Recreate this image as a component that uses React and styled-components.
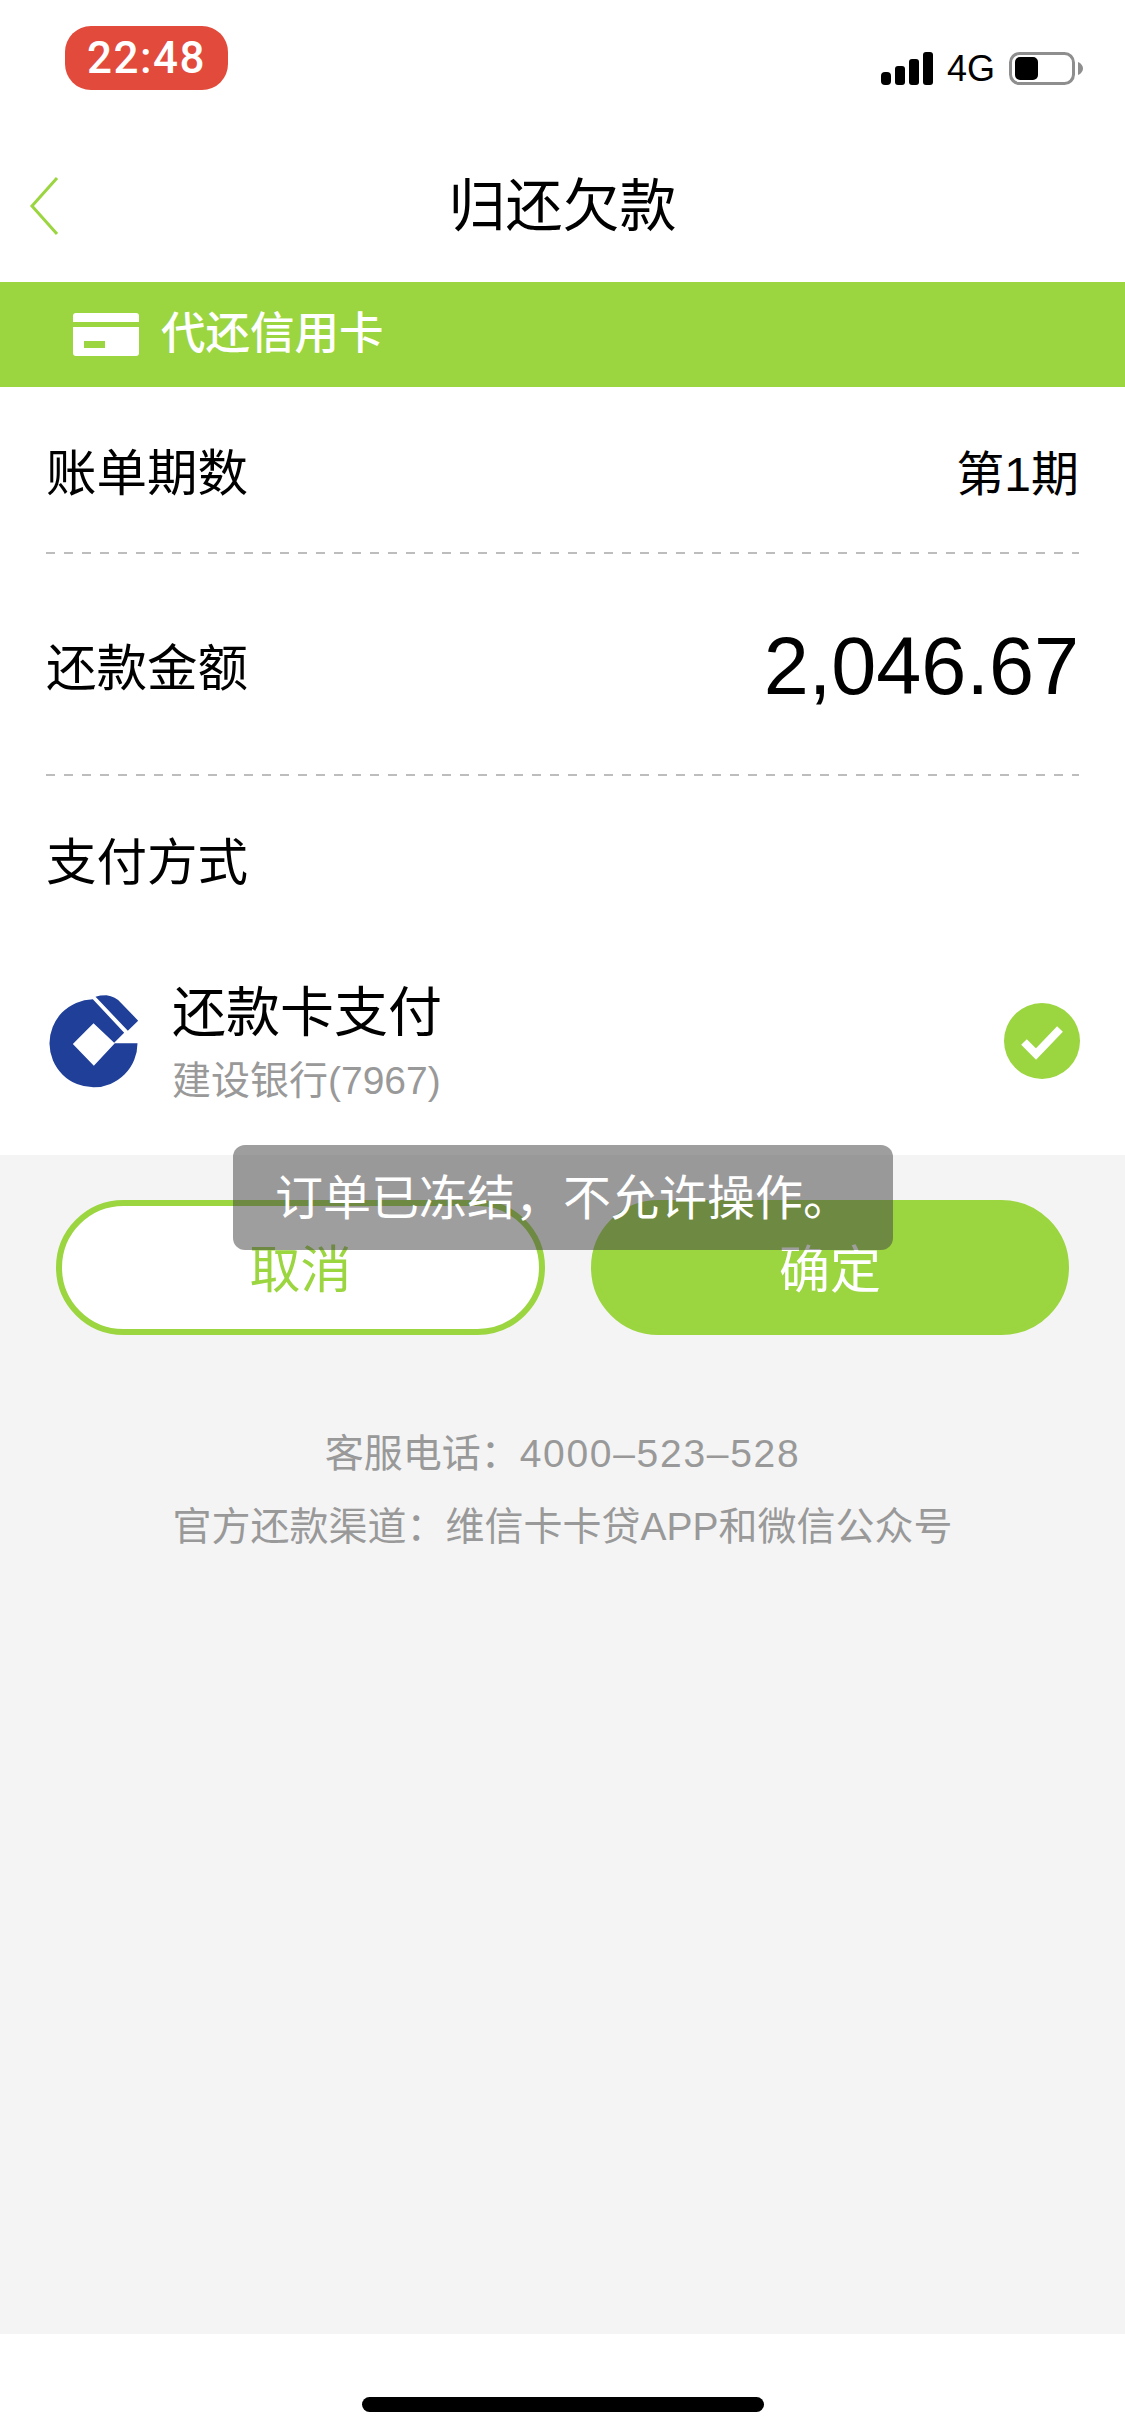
import React from "react"
import styled, { createGlobalStyle } from "styled-components"

const GlobalStyle = createGlobalStyle`
  html, body {
    margin: 0;
    padding: 0;
    background: #fff;
  }
  * { box-sizing: border-box; }
  body {
    font-family: "Liberation Sans", "Noto Sans CJK SC", sans-serif;
  }
`

const GREEN = "#9bd53f"

function SignalIcon() {
  return (
    <svg width="52" height="33" viewBox="0 0 52 33">
      <rect x="0" y="20" width="10" height="13" rx="4" fill="#000" />
      <rect x="14" y="14" width="10" height="19" rx="3" fill="#000" />
      <rect x="28" y="7" width="10" height="26" rx="3" fill="#000" />
      <rect x="42" y="0" width="10" height="33" rx="3" fill="#000" />
    </svg>
  )
}

function BatteryIcon() {
  return (
    <svg width="74" height="33" viewBox="0 0 74 33">
      <rect x="1.5" y="1.5" width="63" height="30" rx="9" fill="#fff" stroke="#8e8e8e" strokeWidth="3" />
      <rect x="6" y="5" width="23" height="23" rx="5" fill="#000" />
      <path d="M69 10 C72 11 74 14 74 16.5 C74 19 72 22 69 23 Z" fill="#8e8e8e" />
    </svg>
  )
}

function BackIcon() {
  return (
    <svg width="30" height="58" viewBox="0 0 30 58">
      <polyline points="28,1 3,29 28,57" fill="none" stroke={GREEN} strokeWidth="3" />
    </svg>
  )
}

function CardIcon() {
  return (
    <svg width="66" height="43" viewBox="0 0 66 43">
      <path d="M3 0 H63 a3 3 0 0 1 3 3 V9 H0 V3 a3 3 0 0 1 3 -3 Z" fill="#fff" />
      <path fillRule="evenodd" d="M0 14 H66 V40 a3 3 0 0 1 -3 3 H3 a3 3 0 0 1 -3 -3 Z M11 28 V35 H32 V28 Z" fill="#fff" />
    </svg>
  )
}

function BankLogo() {
  return (
    <svg width="92" height="95" viewBox="50 70 275 285">
      <path d="M184 86 L278 186 L248 216 L186 158 L124 220 L187 285 L250 218 L318 218 A132 132 0 1 1 184 86 Z" fill="#1f3f99" />
      <path d="M192 78 Q205 74 225 74 Q252 78 268 96 L320 150 L289 180 L205 92 Z" fill="#1f3f99" />
    </svg>
  )
}

function CheckIcon() {
  return (
    <svg width="76" height="76" viewBox="0 0 76 76">
      <circle cx="38" cy="38" r="38" fill={GREEN} />
      <polyline points="20,39 32,51 56,26" fill="none" stroke="#fff" strokeWidth="8" />
    </svg>
  )
}

export default function App() {
  return (
    <>
      <GlobalStyle />
      <Page>
        <StatusBar>
          <TimePill>22:48</TimePill>
          <StatusIcons>
            <SignalIcon />
            <NetworkLabel>4G</NetworkLabel>
            <BatteryIcon />
          </StatusIcons>
        </StatusBar>
        <NavBar>
          <BackButton><BackIcon /></BackButton>
          <Title>归还欠款</Title>
        </NavBar>
        <Banner>
          <CardIcon />
          <BannerText>代还信用卡</BannerText>
        </Banner>
        <Panel>
          <Row $height={167} $dashed>
            <Label>账单期数</Label>
            <Value>第1期</Value>
          </Row>
          <Row $height={222} $dashed>
            <Label>还款金额</Label>
            <Amount>2,046.67</Amount>
          </Row>
          <Row $height={166}>
            <Label>支付方式</Label>
          </Row>
          <BankRow>
            <BankLogo />
            <BankInfo>
              <BankTitle>还款卡支付</BankTitle>
              <BankSub>建设银行(7967)</BankSub>
            </BankInfo>
            <CheckIcon />
          </BankRow>
        </Panel>
        <Body>
          <Actions>
            <ActionButton>取消</ActionButton>
            <ActionButton $primary>确定</ActionButton>
          </Actions>
          <Service>
            <ServiceLine>客服电话：<Phone>4000–523–528</Phone></ServiceLine>
            <ServiceLine>官方还款渠道：维信卡卡贷APP和微信公众号</ServiceLine>
          </Service>
        </Body>
        <HomeBar>
          <HomeIndicator />
        </HomeBar>
        <Toast>订单已冻结，不允许操作。</Toast>
      </Page>
    </>
  )
}

const Page = styled.div`
  position: relative;
  display: flex;
  flex-direction: column;
  width: 1125px;
  height: 2436px;
  overflow: hidden;
  background: #fff;
`

const StatusBar = styled.div`
  display: flex;
  justify-content: space-between;
  align-items: flex-end;
  height: 90px;
  padding: 26px 42px 5px 65px;
`

const TimePill = styled.div`
  display: flex;
  align-items: center;
  justify-content: center;
  width: 163px;
  height: 64px;
  margin-bottom: -5px;
  border-radius: 26px;
  background: #e24a3b;
  color: #fff;
  font-family: Roboto, sans-serif;
  font-size: 44px;
  font-weight: 500;
  letter-spacing: 1.5px;
`

const StatusIcons = styled.div`
  display: flex;
  align-items: flex-end;
  gap: 14px;
`

const NetworkLabel = styled.span`
  color: #000;
  font-size: 36px;
  line-height: 33px;
`

const NavBar = styled.div`
  position: relative;
  display: flex;
  align-items: center;
  justify-content: center;
  height: 192px;
  padding-top: 40px;
`

const BackButton = styled.div`
  position: absolute;
  left: 29px;
  top: 87px;
  line-height: 0;
`

const Title = styled.div`
  color: #000;
  font-size: 57px;
  line-height: 1;
`

const Banner = styled.div`
  display: flex;
  align-items: center;
  gap: 22px;
  height: 105px;
  padding-left: 73px;
  background: ${GREEN};
`

const BannerText = styled.div`
  color: #fff;
  font-size: 44.5px;
  font-weight: 500;
  line-height: 1;
`

const Panel = styled.div`
  display: flex;
  flex-direction: column;
  padding: 0 46px;
  height: 768px;
`

const Row = styled.div`
  display: flex;
  align-items: center;
  justify-content: space-between;
  flex: none;
  height: ${props => props.$height}px;
  background: ${props => props.$dashed
    ? "repeating-linear-gradient(90deg, #bdbdbd 0 9px, transparent 9px 18px) left bottom / 100% 2px no-repeat"
    : "none"};
`

const Label = styled.div`
  color: #000;
  font-size: 50.5px;
  line-height: 1;
  margin-top: 8px;
`

const Value = styled.div`
  color: #000;
  font-size: 48px;
  line-height: 1;
  margin-top: 8px;
`

const Amount = styled.div`
  color: #000;
  font-size: 81px;
  line-height: 1;
  margin-top: 3px;
`

const BankRow = styled.div`
  display: flex;
  align-items: center;
  margin: 24px -1px 0 2px;
  height: 150px;
`

const BankInfo = styled.div`
  flex: 1;
  display: flex;
  flex-direction: column;
  gap: 21px;
  margin-left: 32px;
  margin-top: 4px;
`

const BankTitle = styled.div`
  color: #000;
  font-size: 54px;
  line-height: 1;
`

const BankSub = styled.div`
  color: #999;
  font-size: 39px;
  line-height: 1;
`

const Body = styled.div`
  flex: 1;
  display: flex;
  flex-direction: column;
  background: #f4f4f4;
`

const Actions = styled.div`
  display: grid;
  grid-template-columns: 489px 478px;
  justify-content: space-between;
  margin: 45px 56px 0 56px;
`

const ActionButton = styled.div`
  display: flex;
  align-items: center;
  justify-content: center;
  height: 135px;
  padding-top: 6px;
  border-radius: 68px;
  border: 6px solid ${GREEN};
  background: ${props => props.$primary ? GREEN : "#fff"};
  color: ${props => props.$primary ? "#fff" : GREEN};
  font-size: 51px;
  line-height: 1;
`

const Service = styled.div`
  display: flex;
  flex-direction: column;
  align-items: center;
  gap: 32px;
  margin-top: 98px;
`

const ServiceLine = styled.div`
  color: #999;
  font-size: 39px;
  line-height: 41px;
`

const Phone = styled.span`
  letter-spacing: 1.7px;
`

const HomeBar = styled.div`
  display: flex;
  justify-content: center;
  height: 102px;
  padding-top: 63px;
  background: #fff;
`

const HomeIndicator = styled.div`
  width: 402px;
  height: 15px;
  border-radius: 8px;
  background: #000;
`

const Toast = styled.div`
  position: absolute;
  left: 233px;
  top: 1145px;
  display: flex;
  align-items: center;
  justify-content: center;
  width: 660px;
  height: 105px;
  padding-top: 2px;
  border-radius: 12px;
  background: rgba(66, 65, 66, 0.51);
  color: #fff;
  font-size: 48px;
  line-height: 1;
`
